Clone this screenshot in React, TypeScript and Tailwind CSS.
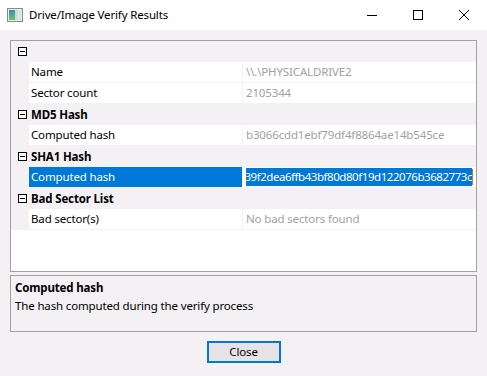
import React from "react";

const BG = "bg-[#f4f1f4]";

function MinusBox() {
  return (
    <svg width="9" height="9" viewBox="0 0 9 9" className="block">
      <rect x="0.5" y="0.5" width="8" height="8" fill="white" stroke="#000" strokeWidth="1" />
      <line x1="2" y1="4.5" x2="7" y2="4.5" stroke="#000" strokeWidth="1" />
    </svg>
  );
}

function Category({ label }: { label: string }) {
  return (
    <div className={`h-[21px] flex items-center shrink-0 ${BG}`}>
      <div className="w-[20px] flex justify-center pl-[2px] shrink-0">
        <MinusBox />
      </div>
      <span className="font-bold text-black">{label}</span>
    </div>
  );
}

function Prop({ name, value }: { name: string; value: string }) {
  return (
    <div className={`h-[21px] flex shrink-0 ${BG}`}>
      <div className="w-[18px] shrink-0" />
      <div className="w-[213px] shrink-0 h-[20px] bg-white flex items-center pl-[2px] text-black">{name}</div>
      <div className="w-[1px] shrink-0" />
      <div className="flex-1 min-w-0 h-[20px] bg-white flex items-center pl-[3px] text-[#a3a0a3] whitespace-nowrap overflow-hidden">
        {value}
      </div>
    </div>
  );
}

function SelectedProp() {
  return (
    <div className={`h-[21px] flex shrink-0 ${BG}`}>
      <div className="w-[18px] shrink-0" />
      <div className="w-[213px] shrink-0 h-[20px] bg-[#0078d7] flex items-center pl-[2px] text-white">Computed hash</div>
      <div className="w-[1px] shrink-0" />
      <div className="flex-1 min-w-0 h-[20px] bg-white flex items-center pl-[3px] pr-[3px]">
        <div className="flex-1 min-w-0 h-[18px] overflow-hidden flex justify-end items-center">
          <span className="bg-[#0078d7] text-white whitespace-nowrap h-[18px] leading-[18px] shrink-0 tracking-[-0.45px]">
            39f2dea6ffb43bf80d80f19d122076b3682773c
          </span>
          <span className="w-[1px] h-[16px] bg-[#e07020] shrink-0" />
        </div>
      </div>
    </div>
  );
}

export default function App() {
  return (
    <div
      className={`w-[487px] h-[376px] ${BG} flex flex-col text-[11.5px] tracking-[-0.15px] text-black overflow-hidden`}
      style={{ fontFamily: "'Segoe UI', 'Noto Sans', sans-serif" }}
    >
      {/* Title bar */}
      <div className="h-[30px] bg-white flex items-center shrink-0">
        <div className="pl-[7px] pr-[6px] flex items-center">
          <svg width="16" height="14" viewBox="0 0 16 14" className="block">
            <defs>
              <linearGradient id="g1" x1="0" y1="0" x2="0" y2="1">
                <stop offset="0" stopColor="#3f8fa8" />
                <stop offset="1" stopColor="#6fbf6a" />
              </linearGradient>
            </defs>
            <rect x="0.5" y="0.5" width="15" height="13" fill="#e8ecee" stroke="#8a8a8a" />
            <rect x="2" y="2" width="6" height="10" fill="url(#g1)" />
            <rect x="8" y="2" width="3" height="10" fill="#c9dde0" />
            <rect x="12" y="2" width="2" height="10" fill="#d8e2e4" />
          </svg>
        </div>
        <span className="text-black">Drive/Image Verify Results</span>
        <div className="flex-1" />
        <div className="w-[46px] h-[30px] flex items-center justify-center">
          <svg width="10" height="10" viewBox="0 0 10 10">
            <line x1="0" y1="5.5" x2="10" y2="5.5" stroke="#000" strokeWidth="1" />
          </svg>
        </div>
        <div className="w-[46px] h-[30px] flex items-center justify-center">
          <svg width="10" height="10" viewBox="0 0 10 10">
            <rect x="0.5" y="0.5" width="9" height="9" fill="none" stroke="#000" strokeWidth="1" />
          </svg>
        </div>
        <div className="w-[46px] h-[30px] flex items-center justify-center">
          <svg width="10" height="10" viewBox="0 0 10 10">
            <path d="M0 0 L10 10 M10 0 L0 10" stroke="#000" strokeWidth="1" />
          </svg>
        </div>
      </div>

      <div className="flex flex-col px-[10px] pt-[10px]">
        {/* Property grid */}
        <div className="h-[232px] border border-[#a0a0a0] bg-white flex flex-col">
          <Category label="" />
          <Prop name="Name" value="\\.\PHYSICALDRIVE2" />
          <Prop name="Sector count" value="2105344" />
          <Category label="MD5 Hash" />
          <Prop name="Computed hash" value="b3066cdd1ebf79df4f8864ae14b545ce" />
          <Category label="SHA1 Hash" />
          <SelectedProp />
          <Category label="Bad Sector List" />
          <Prop name="Bad sector(s)" value="No bad sectors found" />
        </div>

        {/* Description */}
        <div className={`mt-[3px] h-[57px] border border-[#a0a0a0] ${BG} flex flex-col pl-[4px] pt-[3px]`}>
          <span className="font-bold leading-[18px]">Computed hash</span>
          <span className="leading-[18px]">The hash computed during the verify process</span>
        </div>

        {/* Button */}
        <div className="flex justify-center mt-[9px]">
          <button className="w-[74px] h-[22px] border-2 border-[#0078d7] bg-[#e6e2e6] flex items-center justify-center text-black">
            Close
          </button>
        </div>
      </div>
    </div>
  );
}
